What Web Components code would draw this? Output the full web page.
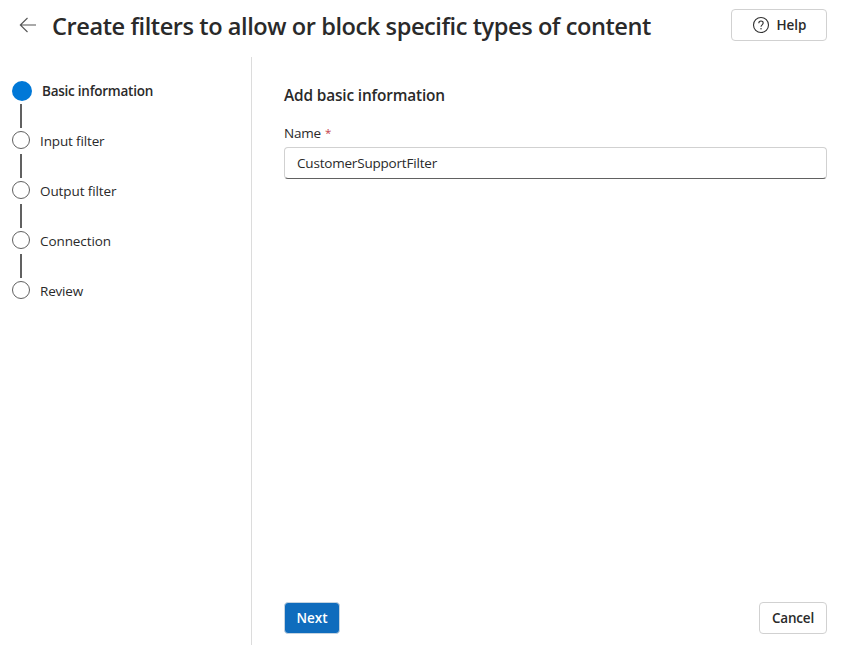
<!DOCTYPE html>
<html lang="en">
<head>
<meta charset="utf-8">
<title>Create filters</title>
<style>
html,body{margin:0;height:100%;background:#fff;overflow:hidden}
body{font-family:"Open Sans","Noto Sans",sans-serif;color:#2a2a2a}
</style>
</head>
<body>
<filter-wizard></filter-wizard>
<script>
function define(name, html, setup) {
  customElements.define(name, class extends HTMLElement {
    connectedCallback() {
      if (this.shadowRoot) return;
      const t = document.createElement('template');
      t.innerHTML = html;
      this.attachShadow({mode: 'open'}).append(t.content.cloneNode(true));
      if (setup) setup(this, this.shadowRoot);
    }
  });
}

/* Single-line label whose tracking is adjusted to a given advance width. */
define('ui-text', `<style>:host{display:inline-block;white-space:nowrap;flex:none}span{display:inline-block}</style><span></span>`,
  (host, root) => {
    const s = root.querySelector('span'), text = host.getAttribute('text'), w = +host.getAttribute('width');
    s.textContent = text;
    s.style.letterSpacing = '0.001px';
    const d = (w - s.getBoundingClientRect().width) / text.length;
    s.style.letterSpacing = d.toFixed(3) + 'px';
    host.style.width = w + 'px';
  });

define('ui-button', `<style>
  :host{display:flex;align-items:center;justify-content:center;box-sizing:border-box;height:32px;border:1px solid #d1d1d1;border-radius:4px;background:#fff;font-size:13.5px;line-height:20px;font-weight:600}
  :host([primary]){background:#0f6cbd;border-color:#c4d3e0;color:#fff}
  </style><slot></slot>`);

define('wizard-header', `<style>
  :host{display:flex;align-items:flex-start;height:57px;box-sizing:border-box;padding:9px 15px 0 19px}
  .back{margin-top:8px;width:18px;height:16px;flex:none}
  h1{margin:1px auto 0 15px;font-size:23.6px;line-height:32px;font-weight:600}
  ui-button{width:96px;gap:7px}
  </style>
  <svg class="back" viewBox="0 0 18 16" fill="none" stroke="#555" stroke-width="1.1"><path d="M17 8H1.5M8.5 1L1.3 8l7.2 7"/></svg>
  <h1><ui-text text="Create filters to allow or block specific types of content" width="599"></ui-text></h1>
  <ui-button>
    <svg width="18" height="18" viewBox="0 0 18 18" fill="none" stroke="#303030" stroke-width="1.1"><circle cx="9" cy="9" r="7.5"/><path d="M6.8 7.2C6.8 5.8 7.7 5 9 5s2.2.8 2.2 2.1c0 1.7-2.2 1.8-2.2 3.7"/><circle cx="9" cy="12.7" r=".75" fill="#303030" stroke="none"/></svg>
    <ui-text text="Help" width="30"></ui-text>
  </ui-button>`);

define('wizard-step', `<style>
  :host{display:flex;height:50px;font-size:13.5px;line-height:20px}
  .rail{display:flex;flex-direction:column;align-items:center;width:18px}
  i{box-sizing:border-box;width:18px;height:18px;border:1px solid #616161;border-radius:50%;flex:none;margin-top:1px}
  b{width:2px;height:24px;background:#616161;margin-top:5px;flex:none}
  ui-text{margin:1px 0 0 10px}
  :host([active]){font-weight:600}
  :host([active]) i{width:20px;height:20px;border:0;background:#0078d7;align-self:flex-start}
  :host([active]) b{margin-top:3px}
  :host([active]) ui-text{margin-left:12px}
  :host([last]) b{display:none}
  </style><div class="rail"><i></i><b></b></div>`,
  (host, root) => {
    const n = document.createElement('ui-text');
    n.setAttribute('text', host.getAttribute('label'));
    n.setAttribute('width', host.getAttribute('width'));
    root.append(n);
  });

define('wizard-steps', `<style>:host{display:block;box-sizing:border-box;width:252px;padding:23px 0 0 12px;border-right:1px solid #dcdcdc;flex:none}</style><slot></slot>`);

define('text-field', `<style>
  :host{display:block;font-size:13.5px;line-height:20px}
  .label{display:flex;gap:4px}
  .star{color:#c4414a;font-size:11.5px}
  .box{box-sizing:border-box;height:32px;margin-top:4px;padding:5px 12px;border:1px solid #d1d1d1;border-bottom-color:#616161;border-radius:4px}
  </style>
  <div class="label"><ui-text text="Name" width="37"></ui-text><span class="star">*</span></div>
  <div class="box"><ui-text text="CustomerSupportFilter" width="140"></ui-text></div>`);

define('wizard-page', `<style>
  :host{display:flex;flex-direction:column;flex:1;box-sizing:border-box;padding:28px 15px 11px 32px}
  h2{margin:0 0 16px;font-size:15.4px;line-height:22px;font-weight:600}
  footer{display:flex;justify-content:space-between;margin-top:auto}
  .next{width:56px}.cancel{width:68px}
  </style>
  <h2><ui-text text="Add basic information" width="161"></ui-text></h2>
  <text-field></text-field>
  <footer><ui-button class="next" primary><ui-text text="Next" width="31"></ui-text></ui-button>
  <ui-button class="cancel"><ui-text text="Cancel" width="42"></ui-text></ui-button></footer>`);

define('filter-wizard', `<style>
  :host{display:flex;flex-direction:column;height:645px}
  main{display:flex;flex:1}
  </style>
  <wizard-header></wizard-header>
  <main>
    <wizard-steps>
      <wizard-step active label="Basic information" width="111"></wizard-step>
      <wizard-step label="Input filter" width="64.5"></wizard-step>
      <wizard-step label="Output filter" width="76.5"></wizard-step>
      <wizard-step label="Connection" width="71"></wizard-step>
      <wizard-step last label="Review" width="43"></wizard-step>
    </wizard-steps>
    <wizard-page></wizard-page>
  </main>`);
</script>
</body>
</html>
